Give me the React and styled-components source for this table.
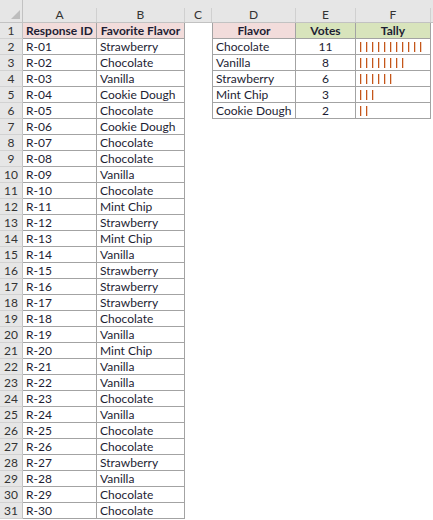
import React from "react";
import styled, { createGlobalStyle } from "styled-components";

const Global = createGlobalStyle`
  html, body { margin: 0; padding: 0; background: #ffffff; }
  body { font-family: Lato, "Liberation Sans", sans-serif; }
`;

const responses = [
  "Strawberry", "Chocolate", "Vanilla", "Cookie Dough", "Chocolate", "Cookie Dough",
  "Chocolate", "Chocolate", "Vanilla", "Chocolate", "Mint Chip", "Strawberry",
  "Mint Chip", "Vanilla", "Strawberry", "Strawberry", "Strawberry", "Chocolate",
  "Vanilla", "Mint Chip", "Vanilla", "Vanilla", "Chocolate", "Vanilla",
  "Chocolate", "Chocolate", "Strawberry", "Vanilla", "Chocolate", "Chocolate",
];

const summary = [
  ["Chocolate", 11],
  ["Vanilla", 8],
  ["Strawberry", 6],
  ["Mint Chip", 3],
  ["Cookie Dough", 2],
];

const Sheet = styled.div`
  display: grid;
  grid-template-columns: 23px 74px 88px 27px 84px 60px 75px 1fr;
  grid-template-rows: 23px repeat(31, 16px);
  width: 433px;
  height: 520px;
  overflow: hidden;
  font-size: 12px;
  color: #1d1d33;
`;

const ColHead = styled.div`
  background: #e6e6e6;
  padding-top: 8px;
  border-bottom: 1px solid #c2c2c2;
  box-sizing: border-box;
`;

const ColLabel = styled.div`
  height: 14px;
  border-right: ${(p) => (p.$last ? "none" : "1px solid #d0d0d0")};
  display: flex;
  align-items: center;
  justify-content: center;
  color: #333;
  font-size: 12px;
  line-height: 14px;
`;

const Corner = styled.div`
  background: #e6e6e6;
  border-bottom: 1px solid #c2c2c2;
  border-right: 1px solid #c2c2c2;
  box-sizing: border-box;
  display: flex;
  align-items: flex-end;
  justify-content: flex-end;
  padding: 0 2px 3px 0;
`;

const RowHead = styled.div`
  background: #e6e6e6;
  border-right: 1px solid #c2c2c2;
  border-bottom: 1px solid #d2d2d2;
  box-sizing: border-box;
  text-align: center;
  color: #333;
  line-height: 15px;
`;

const Cell = styled.div`
  box-sizing: border-box;
  border-right: ${(p) => (p.$border ? "1px solid #a3a3a3" : "none")};
  border-bottom: ${(p) => (p.$border ? "1px solid #a3a3a3" : "none")};
  border-left: ${(p) => (p.$leftBorder ? "1px solid #a3a3a3" : "none")};
  background: ${(p) => p.$bg || "#ffffff"};
  font-weight: ${(p) => (p.$bold ? 700 : 400)};
  text-align: ${(p) => p.$align || "left"};
  padding: 0 3px;
  line-height: 15px;
  white-space: nowrap;
  overflow: hidden;
`;

const Tally = styled.div`
  box-sizing: border-box;
  border-right: 1px solid #a3a3a3;
  border-bottom: 1px solid #a3a3a3;
  display: flex;
  align-items: center;
  gap: 5px;
  padding: 1px 0 0 4px;
`;

const Bar = styled.span`
  display: block;
  width: 1px;
  height: 10px;
  background: #c4561a;
  box-shadow: 1px 0 0 rgba(214, 120, 70, 0.35);
`;

const PINK = "#f2dcdb";
const GREEN = "#d8e4bc";

export default function App() {
  const cells = [];
  cells.push(
    <Corner key="corner">
      <svg width="9" height="9" viewBox="0 0 9 9">
        <polygon points="9,0 9,9 0,9" fill="#bdbdbd" />
      </svg>
    </Corner>
  );
  ["A", "B", "C", "D", "E", "F", ""].forEach((l, i) => {
    cells.push(
      <ColHead key={"h" + i}>
        <ColLabel $last={i === 6}>{l}</ColLabel>
      </ColHead>
    );
  });

  for (let r = 1; r <= 31; r++) {
    cells.push(<RowHead key={"r" + r}>{r}</RowHead>);
    if (r === 1) {
      cells.push(<Cell key="a1" $border $bold $align="center" $bg={PINK}>Response ID</Cell>);
      cells.push(<Cell key="b1" $border $bold $align="center" $bg={PINK}>Favorite Flavor</Cell>);
    } else {
      cells.push(<Cell key={"a" + r} $border>{`R-${String(r - 1).padStart(2, "0")}`}</Cell>);
      cells.push(<Cell key={"b" + r} $border>{responses[r - 2]}</Cell>);
    }
    cells.push(<Cell key={"c" + r} />);
    if (r === 1) {
      cells.push(<Cell key="d1" $border $leftBorder $bold $align="center" $bg={PINK}>Flavor</Cell>);
      cells.push(<Cell key="e1" $border $bold $align="center" $bg={GREEN}>Votes</Cell>);
      cells.push(<Cell key="f1" $border $bold $align="center" $bg={GREEN}>Tally</Cell>);
    } else if (r <= 6) {
      const [name, n] = summary[r - 2];
      cells.push(<Cell key={"d" + r} $border $leftBorder>{name}</Cell>);
      cells.push(<Cell key={"e" + r} $border $align="center">{n}</Cell>);
      cells.push(
        <Tally key={"f" + r}>
          {Array.from({ length: n }, (_, i) => (
            <Bar key={i} />
          ))}
        </Tally>
      );
    } else {
      cells.push(<Cell key={"d" + r} />);
      cells.push(<Cell key={"e" + r} />);
      cells.push(<Cell key={"f" + r} />);
    }
    cells.push(<Cell key={"g" + r} />);
  }

  return (
    <>
      <Global />
      <Sheet>{cells}</Sheet>
    </>
  );
}
